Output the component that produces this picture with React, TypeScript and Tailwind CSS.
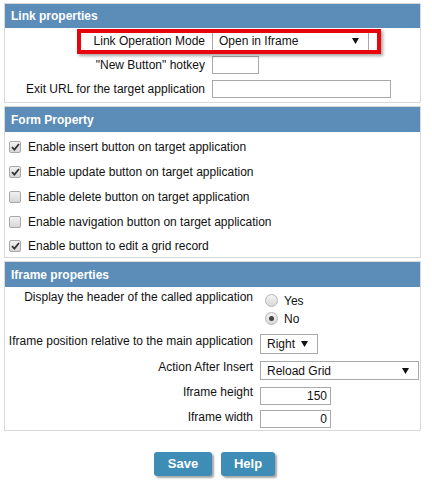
import React from "react";

const font = { fontFamily: '"Liberation Sans", Arial, sans-serif' };

function Arrow() {
  return (
    <svg width="7" height="6" viewBox="0 0 7 6" className="shrink-0">
      <polygon points="0,0 7,0 3.5,6" fill="#111" />
    </svg>
  );
}

function Select({ value, className }: { value: string; className: string }) {
  return (
    <div
      className={`flex items-center justify-between border border-[#a9a9a9] bg-white pl-[6px] pr-[9px] text-[12px] text-[#111] ${className}`}
    >
      <span>{value}</span>
      <Arrow />
    </div>
  );
}

function Input({ value = "", className }: { value?: string; className: string }) {
  return (
    <div
      className={`flex items-center justify-end border border-[#a9a9a9] bg-white pr-[3px] text-[12px] text-[#111] ${className}`}
    >
      {value}
    </div>
  );
}

function Header({ title, h }: { title: string; h: string }) {
  return (
    <div className={`flex items-center bg-[#5b8db8] pl-[6px] text-[12px] font-bold text-white ${h}`}>
      {title}
    </div>
  );
}

function Checkbox({ checked }: { checked: boolean }) {
  return (
    <div className="flex h-[12px] w-[12px] items-center justify-center rounded-[2px] border border-[#a8a8a8] bg-gradient-to-b from-[#f2f2f2] to-[#d6d6d6]">
      {checked && (
        <svg width="9" height="8" viewBox="0 0 9 8">
          <path d="M1 4.2 L3.4 6.6 L8 1" stroke="#333" strokeWidth="1.8" fill="none" />
        </svg>
      )}
    </div>
  );
}

function Radio({ checked }: { checked: boolean }) {
  return (
    <div className="flex h-[13px] w-[13px] items-center justify-center rounded-full border border-[#b5b5b5] bg-gradient-to-b from-[#f4f4f4] to-[#d9d9d9]">
      {checked && <div className="h-[5px] w-[5px] rounded-full bg-[#444]" />}
    </div>
  );
}

export default function App() {
  const checks: [boolean, string, string][] = [
    [true, "Enable insert button on target application", "h-[25px]"],
    [true, "Enable update button on target application", "h-[25px]"],
    [false, "Enable delete button on target application", "h-[25px]"],
    [false, "Enable navigation button on target application", "h-[25px]"],
    [true, "Enable button to edit a grid record", "h-[23px]"],
  ];
  return (
    <div className="h-[483px] w-[432px] bg-white pt-[3px] text-[#111]" style={font}>
      {/* Panel 1 */}
      <div className="ml-[4px] w-[417px] border border-[#d8d8d8]">
        <Header title="Link properties" h="h-[24px]" />
        <div className="flex flex-col pb-[1px] pt-[1px]">
          <div className="relative grid h-[24px] grid-cols-[200px_1fr] items-center gap-x-[7px]">
            <div className="text-right text-[12px]">Link Operation Mode</div>
            <Select value="Open in Iframe" className="h-[19px] w-[157px]" />
            <div className="pointer-events-none absolute left-[72px] top-0 h-[25px] w-[304px] border-[4px] border-[#e8060c] shadow-[2px_2px_3px_rgba(0,0,0,0.35)]" />
          </div>
          <div className="grid h-[24px] grid-cols-[200px_1fr] items-center gap-x-[7px]">
            <div className="text-right text-[12px]">"New Button" hotkey</div>
            <Input className="h-[18px] w-[47px]" />
          </div>
          <div className="grid h-[24px] grid-cols-[200px_1fr] items-center gap-x-[7px]">
            <div className="text-right text-[12px]">Exit URL for the target application</div>
            <Input className="h-[18px] w-[179px]" />
          </div>
        </div>
      </div>

      {/* Panel 2 */}
      <div className="ml-[4px] mt-[3px] w-[417px] border border-[#d8d8d8]">
        <Header title="Form Property" h="h-[25px]" />
        <div className="flex flex-col pt-[2px]">
          {checks.map(([c, t, h]) => (
            <div key={t} className={`flex items-center ${h}`}>
              <div className="ml-[4px] w-[12px]">
                <Checkbox checked={c} />
              </div>
              <span className="ml-[7px] text-[12px]">{t}</span>
            </div>
          ))}
        </div>
      </div>

      {/* Panel 3 */}
      <div className="ml-[4px] mt-[3px] w-[417px] border border-[#d8d8d8]">
        <Header title="Iframe properties" h="h-[25px]" />
        <div className="flex flex-col pb-[2px] pt-[1px]">
          <div className="grid grid-cols-[248px_1fr] items-start gap-x-[7px]">
            <div className="whitespace-nowrap text-right text-[12px]">Display the header of the called application</div>
            <div className="mt-[2px] flex flex-col">
              <div className="flex h-[18px] items-center pt-[3px]">
                <div className="ml-[5px]">
                  <Radio checked={false} />
                </div>
                <span className="ml-[6px] text-[12px]">Yes</span>
              </div>
              <div className="flex h-[18px] items-center pt-[3px]">
                <div className="ml-[5px]">
                  <Radio checked={true} />
                </div>
                <span className="ml-[6px] text-[12px]">No</span>
              </div>
            </div>
          </div>
          <div className="mt-[6px] grid grid-cols-[248px_1fr] items-start gap-x-[7px]">
            <div className="whitespace-nowrap text-right text-[12px]">Iframe position relative to the main application</div>
            <Select value="Right" className="mt-[2px] h-[20px] w-[58px]" />
          </div>
          <div className="mt-[4px] grid grid-cols-[248px_1fr] items-start gap-x-[7px]">
            <div className="whitespace-nowrap text-right text-[12px]">Action After Insert</div>
            <Select value="Reload Grid" className="mt-[3px] h-[19px] w-[159px]" />
          </div>
          <div className="mt-[3px] grid grid-cols-[248px_1fr] items-start gap-x-[7px]">
            <div className="whitespace-nowrap text-right text-[12px]">Iframe height</div>
            <Input value="150" className="mt-[4px] h-[18px] w-[71px]" />
          </div>
          <div className="mt-[3px] grid grid-cols-[248px_1fr] items-start gap-x-[7px]">
            <div className="whitespace-nowrap text-right text-[12px]">Iframe width</div>
            <Input value="0" className="mt-[2px] h-[18px] w-[71px]" />
          </div>
        </div>
      </div>

      <div className="mt-[21px] flex justify-center gap-[9px] pr-[3px]">
        <button className="h-[24px] w-[58px] rounded-[3px] bg-[#3e8db6] text-[13px] font-bold text-white shadow-[2px_2px_2px_rgba(0,0,0,0.35)]">
          Save
        </button>
        <button className="h-[24px] w-[54px] rounded-[3px] bg-[#3e8db6] text-[13px] font-bold text-white shadow-[2px_2px_2px_rgba(0,0,0,0.35)]">
          Help
        </button>
      </div>
    </div>
  );
}
